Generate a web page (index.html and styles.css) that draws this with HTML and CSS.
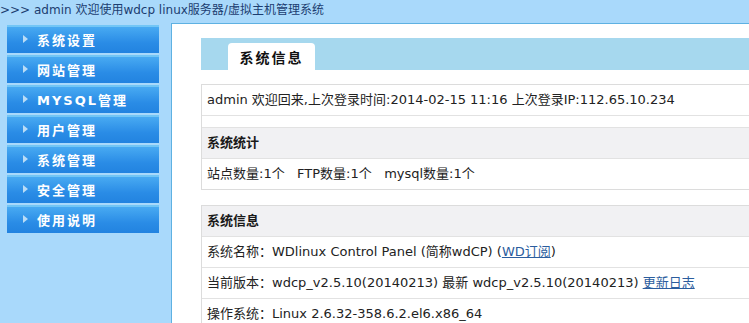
FILE: index.html
```html
<!DOCTYPE html>
<html lang="zh">
<head>
<meta charset="utf-8">
<title>wdcp</title>
<link rel="stylesheet" href="styles.css">
</head>
<body>
<div class="topbar">&gt;&gt;&gt; admin 欢迎使用wdcp linux服务器/虚拟主机管理系统</div>
<div class="layout">
  <ul class="sidebar">
    <li class="menu-item"><span class="arrow"></span><span class="label">系统设置</span></li>
    <li class="menu-item"><span class="arrow"></span><span class="label">网站管理</span></li>
    <li class="menu-item"><span class="arrow"></span><span class="label">MYSQL管理</span></li>
    <li class="menu-item"><span class="arrow"></span><span class="label">用户管理</span></li>
    <li class="menu-item"><span class="arrow"></span><span class="label">系统管理</span></li>
    <li class="menu-item"><span class="arrow"></span><span class="label">安全管理</span></li>
    <li class="menu-item"><span class="arrow"></span><span class="label">使用说明</span></li>
  </ul>
  <div class="main">
    <div class="tabbar"><div class="tab">系统信息</div></div>
    <div class="table first">
      <div class="row">admin 欢迎回来,上次登录时间:2014-02-15 11:16 上次登录IP:112.65.10.234</div>
      <div class="spacer"></div>
      <div class="row head">系统统计</div>
      <div class="row">站点数量:1个&nbsp;&nbsp; FTP数量:1个&nbsp;&nbsp; mysql数量:1个</div>
    </div>
    <div class="table second">
      <div class="row head">系统信息</div>
      <div class="row">系统名称：WDlinux Control Panel (简称wdCP) (<a class="link" href="#">WD订阅</a>)</div>
      <div class="row">当前版本：wdcp_v2.5.10(20140213) 最新 wdcp_v2.5.10(20140213) <a class="link" href="#">更新日志</a></div>
      <div class="row">操作系统：Linux 2.6.32-358.6.2.el6.x86_64</div>
    </div>
  </div>
</div>
</body>
</html>
```
FILE: styles.css
```css
html, body {
  margin: 0;
  padding: 0;
}
body {
  background: #a9d9fb;
  font-family: "DejaVu Sans", "Noto Sans CJK SC", sans-serif;
  font-size: 12px;
  color: #222;
  overflow: hidden;
  width: 749px;
  height: 323px;
}
.topbar {
  height: 20px;
  line-height: 20px;
  color: #1c3d70;
  font-size: 12px;
  white-space: nowrap;
}
.layout {
  display: flex;
  align-items: flex-start;
  margin-top: 3px;
}
.sidebar {
  list-style: none;
  margin: 2px 0 0 7px;
  padding: 0;
  width: 152px;
  flex: none;
  display: flex;
  flex-direction: column;
  gap: 2px;
}
.menu-item {
  height: 28px;
  box-sizing: border-box;
  border-top: 2px solid #72c6f6;
  background: linear-gradient(#48aaf2, #2a8ce6 60%, #2283e0);
  display: flex;
  align-items: center;
  padding-left: 16px;
  color: #fff;
  font-weight: bold;
  font-size: 13px;
  letter-spacing: 2px;
}
.arrow {
  width: 0;
  height: 0;
  border-top: 4px solid transparent;
  border-bottom: 4px solid transparent;
  border-left: 5px solid #b9dcf6;
  margin-right: 9px;
  margin-top: -2px;
}
.label {
  margin-top: -2px;
  white-space: nowrap;
}
.main {
  flex: none;
  width: 640px;
  height: 400px;
  margin-left: 12px;
  background: #fff;
  border: 1px solid #5eb1e2;
  padding: 14px 0 0 29px;
  box-sizing: border-box;
}
.tabbar {
  height: 32px;
  background: #a6d8ee;
  display: flex;
  align-items: flex-end;
  padding-left: 27px;
}
.tab {
  width: 87px;
  height: 27px;
  background: #fff;
  border-radius: 4px 4px 0 0;
  display: flex;
  align-items: center;
  justify-content: center;
  font-size: 14px;
  font-weight: bold;
  letter-spacing: 2px;
  color: #111;
}
.table {
  border: 1px solid #dcdcdc;
  border-right: none;
}
.table.first {
  margin-top: 14px;
}
.table.second {
  margin-top: 15px;
}
.row {
  height: 31px;
  line-height: 30px;
  box-sizing: border-box;
  padding-left: 5px;
  border-top: 1px solid #e2e2e2;
  white-space: nowrap;
  color: #222;
  font-size: 13px;
}
.table > .row:first-child {
  border-top: none;
  height: 30px;
}
.spacer {
  height: 11px;
  border-top: 1px solid #e2e2e2;
}
.row.head {
  background: #f1f1f3;
  font-weight: bold;
  color: #1a1a1a;
}
.link {
  color: #2b5d9e;
  text-decoration: underline;
}
```
